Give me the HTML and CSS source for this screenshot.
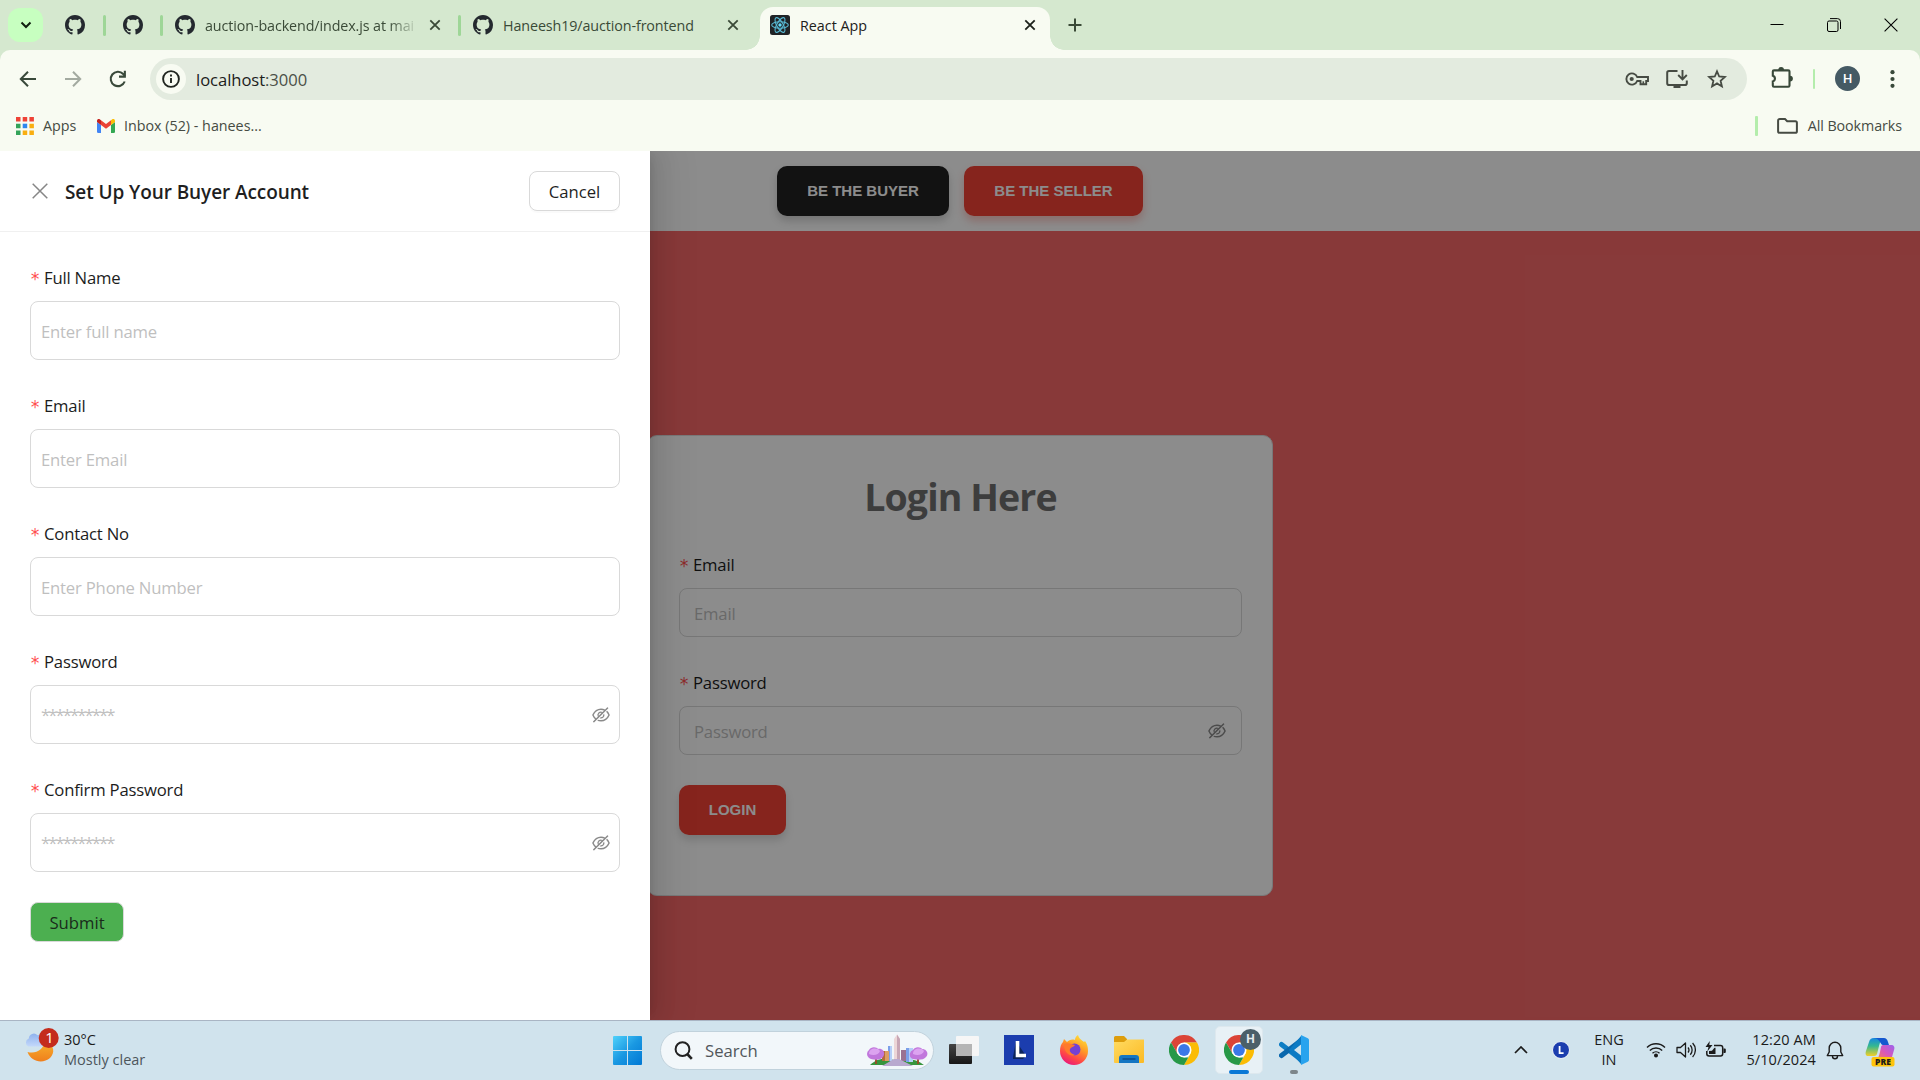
FILE: index.html
```html
<!DOCTYPE html>
<html lang="en">
<head>
<meta charset="utf-8">
<title>React App</title>
<link rel="stylesheet" href="styles.css">
</head>
<body>
<svg class="defs" width="0" height="0" aria-hidden="true">
  <defs>
    <symbol id="github" viewBox="0 0 16 16"><path fill="#24292f" d="M8 0C3.58 0 0 3.58 0 8c0 3.54 2.29 6.53 5.47 7.59.4.07.55-.17.55-.38 0-.19-.01-.82-.01-1.49-2.01.37-2.53-.49-2.69-.94-.09-.23-.48-.94-.82-1.13-.28-.15-.68-.52-.01-.53.63-.01 1.08.58 1.23.82.72 1.21 1.87.87 2.33.66.07-.52.28-.87.51-1.07-1.78-.2-3.64-.89-3.64-3.95 0-.87.31-1.59.82-2.15-.08-.2-.36-1.02.08-2.12 0 0 .67-.21 2.2.82.64-.18 1.32-.27 2-.27s1.36.09 2 .27c1.53-1.04 2.2-.82 2.2-.82.44 1.1.16 1.92.08 2.12.51.56.82 1.27.82 2.15 0 3.07-1.87 3.75-3.65 3.95.29.25.54.73.54 1.48 0 1.07-.01 1.93-.01 2.2 0 .21.15.46.55.38A8.01 8.01 0 0 0 16 8c0-4.42-3.58-8-8-8z"/></symbol>
    <symbol id="cross" viewBox="0 0 12 12"><path d="M1.3 1.3 10.7 10.7M10.7 1.3 1.3 10.7" fill="none" stroke="currentColor" stroke-width="1.8"/></symbol>
    <symbol id="eye-off" viewBox="64 64 896 896"><path fill="currentColor" d="M942.2 486.2Q889.47 375.11 816.7 305l-50.88 50.88C807.31 395.53 843.45 447.4 874.7 512 791.5 684.2 673.4 766 512 766q-72.67 0-133.87-22.38L323 798.75Q408 838 512 838q288.3 0 430.2-300.3a60.29 60.29 0 000-51.5zm-63.57-320.64L836 122.88a8 8 0 00-11.32 0L715.31 232.2Q624.86 186 512 186q-288.3 0-430.2 300.3a60.3 60.3 0 000 51.5q56.69 119.4 136.5 191.41L112.48 835a8 8 0 000 11.31L155.17 889a8 8 0 0011.31 0l712.15-712.12a8 8 0 000-11.32zM149.3 512C232.6 339.8 350.7 258 512 258c54.54 0 104.13 9.36 149.12 28.39l-70.3 70.3a176 176 0 00-238.13 238.13l-83.42 83.42C223.1 637.49 183.3 582.28 149.3 512zm246.7 0a112.11 112.11 0 01146.2-106.69L401.31 546.2A112 112 0 01396 512z"/><path fill="currentColor" d="M508 624c-3.46 0-6.87-.16-10.25-.47l-52.82 52.82a176.09 176.09 0 00227.42-227.42l-52.82 52.82c.31 3.38.47 6.79.47 10.25a111.94 111.94 0 01-112 112z"/></symbol>
    <symbol id="chrome" viewBox="0 0 30 30">
      <path fill="#db4437" d="M2 7.5A15 15 0 0 1 28 7.5H15L8.5 18.7Z"/>
      <path fill="#fbbc05" d="M28 7.5A15 15 0 0 1 15 30l6.5-11.2L21.5 11.2 15 7.5Z"/>
      <path fill="#279847" d="M15 30A15 15 0 0 1 2 7.5l6.5 11.3 6.5 3.7h4.3Z"/>
      <circle cx="15" cy="15" r="7.5" fill="#fff"/><circle cx="15" cy="15" r="5.9" fill="#3b78e7"/>
    </symbol>
  </defs>
</svg>

<div class="tabstrip">
  <div class="tab-search"><svg width="12" height="8" viewBox="0 0 12 8"><path d="M1.5 1.5 6 6l4.5-4.5" fill="none" stroke="#10200f" stroke-width="2"/></svg></div>
  <div class="tab tab-pin1"><svg width="20" height="20"><use href="#github"/></svg></div>
  <i class="tab-sep"></i>
  <div class="tab tab-pin2"><svg width="20" height="20"><use href="#github"/></svg></div>
  <i class="tab-sep"></i>
  <div class="tab tab-backend"><svg width="20" height="20"><use href="#github"/></svg><span class="tab-title fade">auction-backend/index.js at mai</span><svg class="close" width="12" height="12"><use href="#cross"/></svg></div>
  <i class="tab-sep"></i>
  <div class="tab tab-frontend"><svg width="20" height="20"><use href="#github"/></svg><span class="tab-title title-frontend">Haneesh19/auction-frontend</span><svg class="close" width="12" height="12"><use href="#cross"/></svg></div>
  <div class="tab tab-active">
    <svg width="20" height="20" viewBox="0 0 20 20"><rect width="20" height="20" rx="2.5" fill="#202326"/><g fill="none" stroke="#58b9d3" stroke-width="1.1"><ellipse cx="10" cy="10" rx="8.3" ry="3.2"/><ellipse cx="10" cy="10" rx="8.3" ry="3.2" transform="rotate(60 10 10)"/><ellipse cx="10" cy="10" rx="8.3" ry="3.2" transform="rotate(120 10 10)"/></g><circle cx="10" cy="10" r="1.7" fill="#61dafb"/></svg>
    <span class="tab-title title-react">React App</span><svg class="close" width="12" height="12"><use href="#cross"/></svg>
  </div>
  <svg class="new-tab" width="14" height="14" viewBox="0 0 14 14"><path d="M7 .5v13M.5 7h13" stroke="#3a4a37" stroke-width="2"/></svg>
  <div class="window-controls">
    <svg width="14" height="14" viewBox="0 0 14 14"><path d="M.5 6.5h13" stroke="#000" stroke-width="1"/></svg>
    <svg width="14" height="14" viewBox="0 0 14 14"><rect x=".5" y="3" width="10.5" height="10.5" rx="1.5" fill="none" stroke="#000"/><path d="M3 .6h7.5a3 3 0 0 1 3 3V11" fill="none" stroke="#000"/></svg>
    <svg width="14" height="14" viewBox="0 0 14 14"><path d="M.6.6l12.8 12.8M13.4.6.6 13.4" stroke="#000" stroke-width="1.1"/></svg>
  </div>
</div>

<div class="chrome-bars">
  <div class="toolbar">
    <div class="nav-buttons">
      <svg width="18" height="18" viewBox="0 0 18 18"><path d="M17 9H2M9 1.8 1.8 9 9 16.2" fill="none" stroke="#39493a" stroke-width="2"/></svg>
      <svg width="18" height="18" viewBox="0 0 18 18"><path d="M1 9h15M9 1.8 16.2 9 9 16.2" fill="none" stroke="#a3aaa0" stroke-width="2"/></svg>
      <svg width="18" height="18" viewBox="0 0 18 18"><path d="M15.7 11.5A7.2 7.2 0 1 1 14.2 4L16 6" fill="none" stroke="#39493a" stroke-width="2.1"/><path d="M16.9.8v6.9H10V5.6h4.8V.8z" fill="#39493a"/></svg>
    </div>
    <div class="omnibox">
      <span class="site-info"><svg width="18" height="18" viewBox="0 0 18 18"><circle cx="9" cy="9" r="7.9" fill="none" stroke="#20251f" stroke-width="1.9"/><path d="M9 8v5M9 4.6v1.9" stroke="#20251f" stroke-width="1.9"/></svg></span>
      <span class="url"><b>localhost</b>:3000</span>
      <svg class="omni-icon" width="24" height="14" viewBox="0 0 24 14"><path d="M12.2 5A5.6 5.6 0 1 0 12.2 9h3.3v3.2h5.7V9H23V5Z" fill="none" stroke="#464b43" stroke-width="1.9"/><path d="M18.3 9.3v2.6" stroke="#464b43" stroke-width="1.6"/><circle cx="6.7" cy="7" r="2.1" fill="#464b43"/></svg>
      <svg class="omni-icon" width="22" height="20" viewBox="0 0 22 20"><path d="M11.5 2H3a1.8 1.8 0 0 0-1.8 1.8v10.4A1.8 1.8 0 0 0 3 16h16a1.8 1.8 0 0 0 1.8-1.8V11.5" fill="none" stroke="#464b43" stroke-width="2"/><path d="M7.5 16h7v3h-7z" fill="#464b43"/><path d="M16.5 1v9M12.2 6l4.3 4.3L20.8 6" fill="none" stroke="#464b43" stroke-width="1.9"/></svg>
      <svg class="omni-icon" width="20" height="20" viewBox="0 0 20 20"><path d="m10 2.3 2.2 5.2 5.7.5-4.3 3.8 1.3 5.6L10 14.4l-4.9 3 1.3-5.6L2.1 8l5.7-.5Z" fill="none" stroke="#464b43" stroke-width="1.8"/></svg>
    </div>
    <svg class="puzzle" width="22" height="22" viewBox="0 0 22 22"><path d="M3 3.4h14.3a1.2 1.2 0 0 1 1.2 1.2v14a1.2 1.2 0 0 1-1.2 1.2H3a1.2 1.2 0 0 1-1.2-1.2v-4.2a2.9 2.9 0 0 0 0-5.6V4.6A1.2 1.2 0 0 1 3 3.4Z" fill="none" stroke="#39493a" stroke-width="2.1"/><path d="M7.2 3a2.9 2.9 0 0 1 5.8 0ZM19 8.7a2.9 2.9 0 0 1 0 5.8Z" fill="#39493a"/></svg>
    <i class="bar-sep toolbar-sep"></i>
    <span class="avatar">H</span>
    <svg class="dots" width="5" height="18" viewBox="0 0 5 18" fill="#39493a"><circle cx="2.5" cy="2.2" r="2.1"/><circle cx="2.5" cy="9" r="2.1"/><circle cx="2.5" cy="15.8" r="2.1"/></svg>
  </div>
  <div class="bookmarks">
    <svg class="apps-icon" width="18" height="18" viewBox="0 0 18 18"><path fill="#ee4236" d="M0 0h4.5v4.5H0zM6.7 0h4.5v4.5H6.7zM13.4 0h4.5v4.5h-4.5z"/><path fill="#34a35a" d="M0 6.7h4.5v4.5H0zM0 13.4h4.5v4.5H0z"/><path fill="#2d86ee" d="M6.7 6.7h4.5v4.5H6.7z"/><path fill="#f9ae11" d="M13.4 6.7h4.5v4.5h-4.5zM6.7 13.4h4.5v4.5H6.7zM13.4 13.4h4.5v4.5h-4.5z"/></svg>
    <span class="apps-label">Apps</span>
    <svg class="gmail" width="18" height="14" viewBox="0 0 18 14"><path fill="#4285f4" d="M0 3v9.7A1.3 1.3 0 0 0 1.3 14H4V6Z"/><path fill="#34a853" d="M18 3v9.7a1.3 1.3 0 0 1-1.3 1.3H14V6Z"/><path fill="#ea4335" d="M4 1.3 9 5l5-3.7V6L9 9.8 4 6Z"/><path fill="#c5221f" d="M0 1.8C0 .2 1.800-.5 3 .500L4 1.300V6L0 3Z"/><path fill="#fbbc04" d="M18 1.800c0-1.600-1.800-2.300-3-1.300l-1 .8V6l4-3Z"/></svg>
    <span class="inbox-label">Inbox (52) - hanees...</span>
    <i class="bar-sep bookmarks-sep"></i>
    <svg class="folder" width="21" height="16" viewBox="0 0 21 16"><path d="M1.100 13.200V2.700A1.600 1.600 0 0 1 2.700 1.100H8l2.200 2.200h8.200A1.500 1.500 0 0 1 19.900 4.800v8.400a1.600 1.600 0 0 1-1.600 1.600H2.700a1.600 1.600 0 0 1-1.600-1.600Z" fill="none" stroke="#464b43" stroke-width="2"/></svg>
    <span class="all-label">All Bookmarks</span>
  </div>
</div>

<div class="viewport">
  <div class="page">
    <header class="page-header">
      <button class="btn btn-dark">BE THE BUYER</button>
      <button class="btn btn-red">BE THE SELLER</button>
    </header>
    <main class="hero">
      <section class="login-card">
        <h1>Login Here</h1>
        <div class="label"><em>*</em>Email</div>
        <div class="login-field"><span class="ph">Email</span></div>
        <div class="label"><em>*</em>Password</div>
        <div class="login-field"><span class="ph">Password</span><svg class="eye" width="18" height="18"><use href="#eye-off"/></svg></div>
        <button class="btn btn-login">LOGIN</button>
      </section>
    </main>
  </div>
  <div class="mask"></div>
  <aside class="drawer">
    <div class="drawer-header">
      <svg width="16" height="16" viewBox="0 0 16 16"><path d="M.7.700l14.600 14.600M15.300.700.700 15.300" stroke="#868686" stroke-width="1.500"/></svg>
      <h2>Set Up Your Buyer Account</h2>
      <button class="cancel">Cancel</button>
    </div>
    <form class="drawer-body">
      <div class="label"><em>*</em>Full Name</div>
      <div class="field"><span class="ph">Enter full name</span></div>
      <div class="label"><em>*</em>Email</div>
      <div class="field"><span class="ph">Enter Email</span></div>
      <div class="label"><em>*</em>Contact No</div>
      <div class="field"><span class="ph">Enter Phone Number</span></div>
      <div class="label"><em>*</em>Password</div>
      <div class="field field-password"><span class="ph stars">**********</span><svg class="eye" width="18" height="18"><use href="#eye-off"/></svg></div>
      <div class="label"><em>*</em>Confirm Password</div>
      <div class="field field-password"><span class="ph stars">**********</span><svg class="eye" width="18" height="18"><use href="#eye-off"/></svg></div>
      <button class="submit" type="button">Submit</button>
    </form>
  </aside>
</div>

<footer class="taskbar">
  <div class="weather">
    <svg width="36" height="38" viewBox="0 0 36 38">
      <defs><linearGradient id="moon" x1="0" y1="0" x2="0" y2="1"><stop offset="0" stop-color="#f8b32c"/><stop offset="1" stop-color="#ef7f1d"/></linearGradient><linearGradient id="cloud" x1="0" y1="0" x2="0" y2="1"><stop offset="0" stop-color="#8fb2ee"/><stop offset="1" stop-color="#c3d8fa"/></linearGradient></defs>
      <path fill="url(#moon)" d="M3.500 25c9 2 15.500-2 17.500-11 10 4 10 12 5 17-7 6-19 4-22.500-6Z"/>
      <path fill="url(#cloud)" d="M4.500 19.500a4.300 4.300 0 0 1 .3-8 5 5 0 0 1 8.700-3.200 6 6 0 0 1 4 11.200Z"/>
      <circle cx="24.700" cy="11" r="10" fill="#c42b1c"/><text class="badge-num" x="25.500" y="16" text-anchor="middle" fill="#fff">1</text>
    </svg>
    <div class="weather-text"><span class="temp">30°C</span><span class="sky">Mostly clear</span></div>
  </div>
  <div class="task-center">
    <svg class="start" width="29" height="29" viewBox="0 0 29 29"><defs><linearGradient id="win" x1="0" y1="0" x2="1" y2="1"><stop offset="0" stop-color="#50d2fb"/><stop offset=".5" stop-color="#1a98e2"/><stop offset="1" stop-color="#0078d4"/></linearGradient></defs><path fill="url(#win)" d="M1 0h13v14H0V1a1 1 0 0 1 1-1ZM15 0h13a1 1 0 0 1 1 1v13H15ZM0 15h14v14H1a1 1 0 0 1-1-1ZM15 15h14v13a1 1 0 0 1-1 1H15Z"/></svg>
    <div class="search">
      <svg width="19" height="19" viewBox="0 0 19 19"><circle cx="8.500" cy="8.200" r="6.900" fill="none" stroke="#222" stroke-width="2"/><path d="m13.200 13 4.600 4.800" stroke="#222" stroke-width="2.600"/></svg>
      <span>Search</span>
      <svg class="city" width="62" height="33" viewBox="0 0 62 33">
        <path fill="#37953d" d="M4 31c7-7 16-8 24-5l6 1c9-4 18-1 24 4Z"/>
        <path fill="#7b9fe9" d="M22 12h4v15h-4zM40 14h7v14h-7z"/><path fill="#b6cff8" d="M24 12h2v15h-2zM43 14h4v14h-4z"/>
        <path fill="#b66b39" d="M16 17h7v10h-7z"/><path fill="#dc9f63" d="M19 17h4v10h-4z"/><path fill="#9a7192" d="M35 16h5v11h-5z"/>
        <path fill="#ecd6d7" d="M28 5l3-4.500L34 5v22h-6z"/><path fill="#c7a6b5" d="M31 .5 34 5v22h-3z"/>
        <path fill="#b9a9cf" d="M28 25h5l14 7H16Z"/>
        <path stroke="#9b4b24" stroke-width="1.800" d="M10 20v10M52 20v10"/>
        <path fill="#c177dc" d="M3 24a5 5 0 0 1 0-8c2-4 8-3 9-1 5-1 8 4 5 8-3 4-11 3-14 1Z"/><path fill="#c177dc" d="M45 24a5 5 0 0 1 2-8c2-4 8-3 9-1 5 0 7 5 4 8-3 4-12 3-15 1Z"/>
        <path fill="#dca3f0" d="M3 20c0-6 8-7 11-3-1 4-7 5-11 3ZM47 20c0-6 8-7 11-3-1 4-7 5-11 3Z"/>
      </svg>
    </div>
    <div class="app"><svg width="30" height="30" viewBox="0 0 30 30"><defs><linearGradient id="tv" x1="0" y1="0" x2="0" y2="1"><stop offset="0" stop-color="#444"/><stop offset="1" stop-color="#171717"/></linearGradient></defs><rect y="9" width="23" height="20" rx="1" fill="url(#tv)"/><rect x="7" y="1" width="23" height="20" rx="1" fill="#f6f6f6"/><path fill="#b5b5b5" d="M7 9h16v12H7z"/></svg></div>
    <div class="app app-l"><svg width="30" height="30" viewBox="0 0 30 30"><path fill="#1b3dae" d="M0 0h30v30H0z"/><path fill="#0c245b" d="m12 6-3 16v2h10l3-3"/><path d="M13.500 6v14.500H22" fill="none" stroke="#fff" stroke-width="3.600"/></svg></div>
    <div class="app app-ff"><svg width="30" height="30" viewBox="0 0 30 30"><defs><linearGradient id="ff" x1=".8" y1="0" x2=".3" y2="1"><stop offset="0" stop-color="#ffe63b"/><stop offset=".4" stop-color="#ff9a26"/><stop offset=".75" stop-color="#ff4548"/><stop offset="1" stop-color="#e8177d"/></linearGradient></defs><path fill="url(#ff)" d="M1 16C1 12 2 9 4 7l1-3 3 3c2-2 5-3 8-2C16 3 17 1 19 0c1 4 4 5 6 7l1-1c3 4 3 8 3 10a14 14 0 0 1-28 0Z"/><circle cx="15.500" cy="14.500" r="6" fill="#7441d4"/><path fill="#ff7a2c" d="M5 9c4-2 7 0 11 1-1 2-4 2-5 4-1 3 2 5 5 6-5 2-11-2-11-11Z"/></svg></div>
    <div class="app app-ex"><svg width="30" height="28" viewBox="0 0 30 28"><defs><linearGradient id="fo" x1="0" y1="0" x2="1" y2="1"><stop offset="0" stop-color="#ffdb62"/><stop offset="1" stop-color="#fcba23"/></linearGradient></defs><path fill="#dd9d0c" d="M0 1.500A1.500 1.500 0 0 1 1.500 0H10l3 3v4H0Z"/><path fill="url(#fo)" d="M0 6h10l3-2.500h17V26a1 1 0 0 1-1 1H1a1 1 0 0 1-1-1Z"/><path fill="#1576c2" d="M5 27v-5a3 3 0 0 1 3-3h14a3 3 0 0 1 3 3v5Z"/><path d="M8.500 23h13" stroke="#0b4582" stroke-width="1.300"/></svg></div>
    <div class="app app-ch"><svg width="30" height="30"><use href="#chrome"/></svg></div>
    <div class="app app-active"><svg width="30" height="30"><use href="#chrome"/></svg><span class="profile-badge">H</span><i class="underline"></i></div>
    <div class="app app-vs"><svg width="30" height="30" viewBox="0 0 30 30"><path d="M2.500 9.500 22 24.500" stroke="#0d7dc4" stroke-width="5" stroke-linecap="round"/><path d="M2.500 20.500 22 5.500" stroke="#0867ad" stroke-width="5" stroke-linecap="round"/><path fill="#0b7ac4" d="M13 11.500 22 1v8.500L15 15l7 5.500V29L13 19l-3-4Z"/><path fill="#29a3ee" d="M22 0 28.800 3.200A2 2 0 0 1 30 5v20a2 2 0 0 1-1.200 1.800L22 30Z"/></svg><i class="running"></i></div>
  </div>
  <div class="tray">
    <svg class="caret" width="14" height="8" viewBox="0 0 14 8"><path d="M1 7l6-6 6 6" fill="none" stroke="#1b1b1b" stroke-width="1.700"/></svg>
    <svg class="tray-l" width="18" height="18" viewBox="0 0 18 18"><circle cx="9" cy="9" r="8.500" fill="#1b3dae" stroke="#eef3f8"/><path d="M7.600 5v7.200h4" fill="none" stroke="#fff" stroke-width="1.800"/></svg>
    <div class="lang"><span>ENG</span><span>IN</span></div>
    <svg class="wifi" width="20" height="16" viewBox="0 0 20 16" fill="none" stroke="#1b1b1b" stroke-width="1.400"><path d="M1 5.500a12.800 12.800 0 0 1 18 0M3.800 8.500a8.800 8.800 0 0 1 12.400 0M6.500 11.300a5 5 0 0 1 7 0"/><circle cx="10" cy="13.500" r="1.300" fill="#1b1b1b"/></svg>
    <svg class="volume" width="20" height="18" viewBox="0 0 20 18" fill="none" stroke="#1b1b1b" stroke-width="1.300"><path d="M1 6.500h3.500L9.500 2v14l-5-4.500H1Z" stroke-linejoin="round"/><path d="M12 6.500a4 4 0 0 1 0 5M14.300 4.300a7 7 0 0 1 0 9.400M16.600 2a10.200 10.200 0 0 1 0 14"/></svg>
    <svg class="battery" width="21" height="18" viewBox="0 0 21 18"><path d="M9 4.500h6.500a2.200 2.200 0 0 1 2.200 2.200v6a2.200 2.200 0 0 1-2.200 2.200H4a2.200 2.200 0 0 1-2.200-2.200V10" fill="none" stroke="#1b1b1b" stroke-width="1.500"/><path fill="#1b1b1b" d="M18.500 7.500h1.300a1 1 0 0 1 1 1v2.400a1 1 0 0 1-1 1h-1.300zM4 13V10l3-.3 2.500-3h1V13ZM4.800 0 .5 6h3L2.300 10.500 7.500 4H4.300Z"/></svg>
    <div class="clock"><span class="time">12:20 AM</span><span class="date">5/10/2024</span></div>
    <svg class="bell" width="18" height="19" viewBox="0 0 18 19"><path d="M9 1.200a5.800 5.800 0 0 0-5.800 5.800v4L1.300 14.600h15.400L14.800 11V7A5.800 5.800 0 0 0 9 1.200ZM6.500 15.200a2.500 2.500 0 0 0 5 0" fill="none" stroke="#1b1b1b" stroke-width="1.400" stroke-linejoin="round"/></svg>
    <svg class="copilot" width="30" height="30" viewBox="0 0 30 30"><defs><linearGradient id="cpa" x1="0" y1="0" x2="0" y2="1"><stop offset="0" stop-color="#1687e0"/><stop offset=".45" stop-color="#35b890"/><stop offset="1" stop-color="#f3cf27"/></linearGradient><linearGradient id="cpb" x1="1" y1="0" x2="0" y2="1"><stop offset="0" stop-color="#9b63ee"/><stop offset=".5" stop-color="#d857b9"/><stop offset="1" stop-color="#fb8347"/></linearGradient></defs><path fill="url(#cpa)" d="M9 1h10c-3 1-4 4-5 8l-2 8c-1 2-2 2-4 2H3c-2 0-3-2-2-5L4 5c1-3 2-4 5-4Z"/><path fill="#1458cf" d="M9 1h10c2 0 3 1 4 4l1 3h-6c-3 0-2-6-9-7Z"/><path fill="url(#cpb)" d="M18 8h8c3 0 4 2 3 5l-2 7c-1 2-2 3-4 3H11c2-1 3-4 4-8l1-5c0-1 1-2 2-2Z"/><rect x="6.500" y="20" width="23" height="9.500" rx="2" fill="#fec40a"/><text class="pre" x="18" y="27.800" text-anchor="middle">PRE</text></svg>
  </div>
</footer>
</body>
</html>
```
FILE: styles.css
```css
* { box-sizing: border-box; }
body {
  margin: 0;
  width: 1920px;
  height: 1080px;
  overflow: hidden;
  display: flex;
  flex-direction: column;
  background: #d5e8cf;
  font-family: "Open Sans", "Noto Sans", sans-serif;
  font-size: 16.7px;
  color: #1f1f1f;
}
.defs { position: absolute; }
svg { flex: none; display: block; }
i { flex: none; }
button { font-family: inherit; padding: 0; white-space: nowrap; }
span { white-space: nowrap; }

/* Tab strip */
.tabstrip { height: 50px; display: flex; align-items: center; padding-left: 8px; flex: none; }
.tab-search { width: 35px; height: 34px; border-radius: 12px; background: #c7ffc0; display: flex; align-items: center; justify-content: center; }
.tab { display: flex; align-items: center; height: 43px; flex: none; font-size: 14.3px; color: #3a4a37; }
.tab-pin1 { padding-left: 22px; width: 60px; }
.tab-pin2 { padding-left: 17px; width: 54px; }
.tab-sep { width: 3px; height: 21px; border-radius: 2px; background: #9ed697; }
.tab-backend { padding-left: 12px; width: 295px; }
.tab-title { margin-left: 10px; flex: none; }
.tab-backend .tab-title { width: 214px; letter-spacing: -.1px; }
.fade { -webkit-mask-image: linear-gradient(90deg, #000 86%, transparent); mask-image: linear-gradient(90deg, #000 86%, transparent); }
.tab-backend .close { margin-left: 10px; }
.tab-frontend { padding-left: 12px; width: 299px; }
.tab-frontend .close { margin-left: auto; margin-right: 21px; }
.title-frontend { letter-spacing: -.1px; }
.tab-active {
  position: relative;
  width: 290px;
  height: 43px;
  margin-top: 7px;
  padding: 0 14px 7px 10px;
  border-radius: 13px 13px 0 0;
  background: #f8fbf2;
  color: #1c211b;
}
.tab-active::before, .tab-active::after {
  content: "";
  position: absolute;
  bottom: 0;
  width: 14px;
  height: 14px;
}
.tab-active::before { left: -14px; background: radial-gradient(circle at 0 0, transparent 13.5px, #f8fbf2 14px); }
.tab-active::after { right: -14px; background: radial-gradient(circle at 100% 0, transparent 13.5px, #f8fbf2 14px); }
.tab-active .close { margin-left: auto; }
.new-tab { margin-left: 18px; }
.window-controls { display: flex; gap: 43px; margin-left: auto; margin-right: 22px; }

/* Toolbar and bookmarks */
.chrome-bars { height: 101px; flex: none; background: #f8fbf2; border-radius: 10px 10px 0 0; }
.toolbar { height: 58px; display: flex; align-items: center; padding-left: 19px; }
.nav-buttons { display: flex; gap: 27px; width: 131px; }
.omnibox { width: 1597px; height: 42px; border-radius: 21px; background: #e3ebdf; display: flex; align-items: center; padding: 0 20px 0 6px; }
.site-info { width: 30px; height: 30px; border-radius: 50%; background: #f8fbf2; display: flex; align-items: center; justify-content: center; }
.url { margin-left: 10px; margin-right: auto; font-size: 16.6px; letter-spacing: -.05px; color: #4b5048; }
.url b { font-weight: 400; color: #1c211b; }
.omni-icon { margin-left: 18px; }
.omni-icon + .omni-icon { margin-left: 17px; }
.omni-icon + .omni-icon + .omni-icon { margin-left: 19px; }
.puzzle { margin-left: 24px; margin-bottom: 3px; }
.bar-sep { width: 2px; height: 20px; background: #b4edac; border-radius: 1px; }
.toolbar-sep { margin-left: 20px; }
.avatar { width: 25px; height: 25px; border-radius: 50%; background: #455a64; color: #fff; font: 500 13px/25px Roboto, sans-serif; text-align: center; margin: 0 0 1px 20px; }
.dots { margin-left: 30px; }
.bookmarks { height: 35px; display: flex; align-items: center; font-size: 14.3px; color: #464b43; padding-left: 16px; }
.apps-label { margin-left: 9px; width: 53px; }
.gmail { margin-left: 1px; }
.inbox-label { margin-left: 9px; }
.bookmarks-sep { width: 3px; margin-left: auto; }
.folder { margin-left: 19px; }
.all-label { margin-left: 10px; margin-right: 18px; letter-spacing: -.08px; }

/* Web page */
.viewport { position: relative; height: 869px; flex: none; overflow: hidden; }
.page { height: 869px; display: flex; flex-direction: column; }
.page-header { height: 80px; background: #fff; display: flex; justify-content: center; align-items: center; gap: 15px; flex: none; }
.btn { height: 50px; border: 0; border-radius: 10px; padding-bottom: 2px; font: 700 15px "Liberation Sans", Arial, sans-serif; color: #fff; }
.btn-dark { width: 172px; background: #212121; box-shadow: 0 5px 8px rgba(33, 33, 33, .2); }
.btn-red { width: 179px; background: #f44336; box-shadow: 0 5px 8px rgba(244, 67, 54, .3); }
.btn-login { width: 107px; margin-top: 30px; background: #f44336; box-shadow: 0 5px 8px rgba(0, 0, 0, .15); }
.hero { flex: 1; background: #f76969; display: flex; justify-content: center; align-items: flex-start; padding-top: 204px; }
.login-card { width: 626px; height: 461px; background: #fff; border: 1px solid #ddd; border-radius: 10px; padding: 31px 30px 0 31px; }
.login-card h1 { margin: 0; height: 60px; line-height: 60px; text-align: center; font-size: 37.5px; font-weight: 700; color: #707070; letter-spacing: -.9px; }
.login-card .label { height: 29px; margin-top: 23px; }
.login-card .login-field + .label { margin-top: 31px; }
.label { display: flex; align-items: center; height: 30px; color: #1c1c1c; letter-spacing: -.2px; }
.label em { font: 17px/20px "DejaVu Sans Mono", monospace; color: #ff4d4f; width: 14px; height: 17px; letter-spacing: 0; }
.login-field { height: 49px; margin-top: 9px; border: 1px solid #d9d9d9; border-radius: 8px; display: flex; align-items: center; padding: 0 15px; }
.login-field .ph { padding-top: 1px; margin-left: -1px; }
.ph { color: #bfbfbf; letter-spacing: -.2px; }
.eye { color: #8a8a8a; margin-left: auto; }
.mask { position: absolute; inset: 0; background: rgba(0, 0, 0, .45); }
.drawer {
  position: absolute;
  inset: 0 auto 0 0;
  width: 650px;
  background: #fff;
  box-shadow: 8px 0 20px rgba(0, 0, 0, .08), 4px 0 8px -5px rgba(0, 0, 0, .12), 11px 0 35px 10px rgba(0, 0, 0, .05);
}
.drawer-header { height: 81px; border-bottom: 1px solid #f0f0f0; display: flex; align-items: center; padding: 0 30px 0 32px; }
.drawer-header h2 { margin: 0 auto 0 17px; padding-top: 2px; font-size: 19px; font-weight: 600; letter-spacing: -.09px; }
.cancel { width: 91px; height: 40px; border: 1px solid #d9d9d9; border-radius: 8px; background: #fff; font-size: 16.7px; color: #1f1f1f; box-shadow: 0 2px 0 rgba(0, 0, 0, .02); }
.drawer-body { padding: 30px; }
.drawer-body .label { height: 30px; }
.field { height: 59px; margin: 9px 0 30px; border: 1px solid #d9d9d9; border-radius: 8px; display: flex; align-items: center; padding: 2px 10px 0; }
.field-password { padding: 0 9px 0 10px; }
.stars { letter-spacing: -1.95px; }
.submit { display: block; width: 94px; height: 40px; border: 1px solid #d9d9d9; border-radius: 8px; background: #4caf50; font-size: 16.7px; color: #1a2b1b; }

/* Taskbar */
.taskbar { height: 60px; flex: none; display: flex; border-top: 1px solid #a9b5c4; background: #d0e3ed; font-size: 14.5px; color: #1b1b1b; }
.weather { width: 613px; display: flex; padding: 6px 0 0 24px; }
.weather-text { display: flex; flex-direction: column; line-height: 20px; padding-top: 3px; margin-left: 4px; }
.sky { color: #4d565c; }
.badge-num { font: 15px "Open Sans", sans-serif; }
.task-center { display: flex; align-items: center; width: 896px; padding-bottom: 1px; }
.search { width: 274px; height: 39px; margin-left: 18px; border-radius: 20px; background: #f2f7fa; border: 1px solid #c1d2dc; display: flex; align-items: center; padding: 0 5px 0 13px; font-size: 16.7px; color: #51565a; }
.search span { margin-left: 12px; }
.city { margin-left: auto; }
.app { margin-left: 15px; }
.app-l { margin-left: 25px; }
.app-ff { margin-left: 25px; }
.app-ex { margin-left: 25px; }
.app-ch { margin-left: 25px; }
.app-active { position: relative; margin-left: 16px; width: 48px; height: 48px; padding: 9px; border-radius: 5px; background: #e8f1f6; border: 1px solid #dde8ee; }
.app-active svg { margin: -1px; }
.profile-badge { position: absolute; left: 24px; top: 2px; width: 21px; height: 21px; border-radius: 50%; background: #4b5f69; color: #e5ebee; font: 700 12px/21px Roboto, sans-serif; text-align: center; }
.underline { position: absolute; left: 13px; bottom: -1px; width: 20px; height: 4px; border-radius: 2px; background: #0a78d6; }
.app-vs { position: relative; margin-left: 16px; }
.running { position: absolute; left: 11px; bottom: -9px; width: 8px; height: 4px; border-radius: 2px; background: #7d868b; }
.tray { flex: 1; display: flex; align-items: center; padding-bottom: 1px; }
.caret { margin-left: 5px; }
.tray-l { margin-left: 24px; }
.lang { display: flex; flex-direction: column; align-items: center; line-height: 20px; width: 30px; margin-left: 24px; }
.wifi { margin-left: 22px; }
.volume { margin-left: 10px; }
.battery { margin-left: 9px; }
.clock { display: flex; flex-direction: column; align-items: flex-end; line-height: 20px; width: 80px; margin-left: 10px; letter-spacing: .1px; }
.bell { margin-left: 10px; }
.copilot { margin-left: 21px; margin-top: 3px; }
.pre { font: 800 8.500px "Open Sans", sans-serif; fill: #1b1b1b; }
```
